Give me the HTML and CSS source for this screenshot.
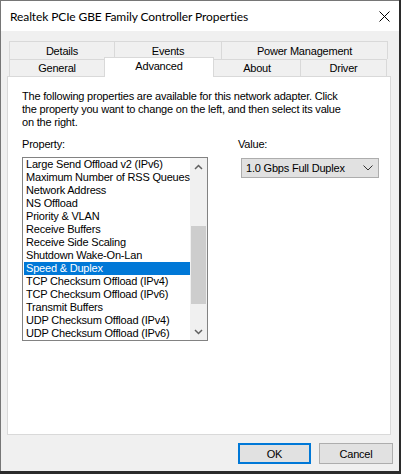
FILE: index.html
```html
<!DOCTYPE html>
<html>
<head>
<meta charset="utf-8">
<link rel="stylesheet" href="styles.css">
</head>
<body>
<div class="window">
  <div class="titlebar">
    <span class="title">Realtek PCIe GBE Family Controller Properties</span>
    <svg class="close" width="11" height="11" viewBox="0 0 11 11"><path d="M0.5 0.5 L10.5 10.5 M10.5 0.5 L0.5 10.5" stroke="#000" stroke-width="1" fill="none"/></svg>
  </div>
  <div class="client">
    <div class="tabs">
      <div class="tabrow back">
        <div class="tab w-details">Details</div>
        <div class="tab w-events">Events</div>
        <div class="tab w-power last">Power Management</div>
      </div>
      <div class="tabrow front">
        <div class="tab w-general">General</div>
        <div class="tab w-advanced selected">Advanced</div>
        <div class="tab w-about">About</div>
        <div class="tab w-driver last">Driver</div>
      </div>
    </div>
    <div class="panel">
      <p class="intro">The following properties are available for this network adapter. Click<br>the property you want to change on the left, and then select its value<br>on the right.</p>
      <div class="columns">
        <div class="col-left">
          <div class="label">Property:</div>
          <div class="listbox">
            <ul class="items">
              <li>Large Send Offload v2 (IPv6)</li>
              <li>Maximum Number of RSS Queues</li>
              <li>Network Address</li>
              <li>NS Offload</li>
              <li>Priority &amp; VLAN</li>
              <li>Receive Buffers</li>
              <li>Receive Side Scaling</li>
              <li>Shutdown Wake-On-Lan</li>
              <li class="sel">Speed &amp; Duplex</li>
              <li>TCP Checksum Offload (IPv4)</li>
              <li>TCP Checksum Offload (IPv6)</li>
              <li>Transmit Buffers</li>
              <li>UDP Checksum Offload (IPv4)</li>
              <li>UDP Checksum Offload (IPv6)</li>
            </ul>
            <div class="scrollbar">
              <div class="arrow">
                <svg width="9" height="6" viewBox="0 0 9 6"><path d="M1 5 L4.5 1.5 L8 5" stroke="#606060" stroke-width="1.5" fill="none"/></svg>
              </div>
              <div class="track">
                <div class="thumb"></div>
              </div>
              <div class="arrow">
                <svg width="9" height="6" viewBox="0 0 9 6"><path d="M1 1 L4.5 4.5 L8 1" stroke="#606060" stroke-width="1.5" fill="none"/></svg>
              </div>
            </div>
          </div>
        </div>
        <div class="col-right">
          <div class="label">Value:</div>
          <div class="combo">
            <span>1.0 Gbps Full Duplex</span>
            <svg width="10" height="6" viewBox="0 0 10 6"><path d="M0.5 0.5 L5 5 L9.5 0.5" stroke="#333" stroke-width="1" fill="none"/></svg>
          </div>
        </div>
      </div>
    </div>
    <div class="buttons">
      <div class="btn default">OK</div>
      <div class="btn">Cancel</div>
    </div>
  </div>
</div>
</body>
</html>
```

FILE: styles.css
```css
html, body {
  margin: 0;
  padding: 0;
}
body {
  width: 401px;
  height: 474px;
  background: #2b2b2b;
  font-family: "Liberation Sans", Arial, sans-serif;
  font-size: 11px;
  letter-spacing: -0.2px;
  color: #000;
  overflow: hidden;
}
.window {
  width: 399px;
  height: 471px;
  box-sizing: border-box;
  border-left: 1px solid #767676;
  border-top: 1px solid #767676;
  display: flex;
  flex-direction: column;
  background: #f0f0f0;
}
.titlebar {
  height: 30px;
  background: #fff;
  display: flex;
  align-items: center;
  justify-content: space-between;
  padding: 0 9px 0 9px;
}
.title {
  font-family: Lato, "Noto Sans", sans-serif;
  font-size: 12px;
  letter-spacing: -0.1px;
  color: #000;
  margin-top: 1px;
}
.close {
  margin-top: 1px;
}
.client {
  flex: 1;
  display: flex;
  flex-direction: column;
  padding: 10px 6px 0 6px;
}
.tabs {
  display: flex;
  flex-direction: column;
  padding-left: 2px;
}
.tabrow {
  display: flex;
}
.tab {
  box-sizing: border-box;
  border-top: 1px solid #d9d9d9;
  border-left: 1px solid #d9d9d9;
  background: #f0f0f0;
  text-align: center;
  line-height: 16px;
}
.tab.last {
  border-right: 1px solid #d9d9d9;
}
.back .tab {
  height: 18px;
  padding-top: 1px;
}
.front .tab {
  height: 17px;
}
.w-details { width: 105px; }
.w-events { width: 107px; }
.w-power { width: 167px; }
.w-general { width: 95px; }
.w-advanced { width: 110px; }
.w-about { width: 87px; }
.w-driver { width: 87px; }
.tab.selected {
  background: #fff;
  border-right: 1px solid #d9d9d9;
  margin-top: -2px;
  height: 20px;
  margin-bottom: -1px;
  margin-right: -1px;
  position: relative;
  z-index: 2;
  line-height: 16px;
}
.panel {
  background: #fff;
  border: 1px solid #d9d9d9;
  height: 359px;
  box-sizing: border-box;
  padding: 13px 14px 0 14px;
  width: 384px;
}
.intro {
  margin: 0;
  line-height: 13px;
}
.columns {
  display: flex;
  margin-top: 9px;
}
.label {
  line-height: 13px;
  height: 13px;
}
.col-left {
  width: 186px;
}
.col-right {
  margin-left: 30px;
}
.col-right .combo {
  margin-left: 3px;
}
.listbox {
  margin-top: 6px;
  width: 186px;
  height: 184px;
  box-sizing: border-box;
  border: 1px solid #828282;
  display: flex;
  background: #fff;
}
.items {
  list-style: none;
  margin: 0;
  padding: 0 0 0 1px;
  flex: 1;
}
.items li {
  height: 13px;
  line-height: 13px;
  padding-left: 2px;
  white-space: nowrap;
  overflow: hidden;
}
.items li.sel {
  background: #0078d7;
  color: #fff;
}
.scrollbar {
  width: 17px;
  background: #f0f0f0;
  display: flex;
  flex-direction: column;
}
.arrow {
  height: 17px;
  display: flex;
  align-items: center;
  justify-content: center;
}
.track {
  flex: 1;
  padding-top: 51px;
}
.thumb {
  margin: 0 1px;
  height: 78px;
  background: #cdcdcd;
}
.combo {
  margin-top: 7px;
  width: 138px;
  height: 20px;
  box-sizing: border-box;
  border: 1px solid #adadad;
  background: #e1e1e1;
  display: flex;
  align-items: center;
  justify-content: space-between;
  padding: 0 5px 0 4px;
}
.buttons {
  display: flex;
  justify-content: flex-end;
  gap: 8px;
  margin-top: 8px;
}
.btn {
  width: 74px;
  height: 21px;
  box-sizing: border-box;
  border: 1px solid #adadad;
  background: #e1e1e1;
  display: flex;
  align-items: center;
  justify-content: center;
}
.btn.default {
  border: 2px solid #0078d7;
  width: 73px;
}
```
